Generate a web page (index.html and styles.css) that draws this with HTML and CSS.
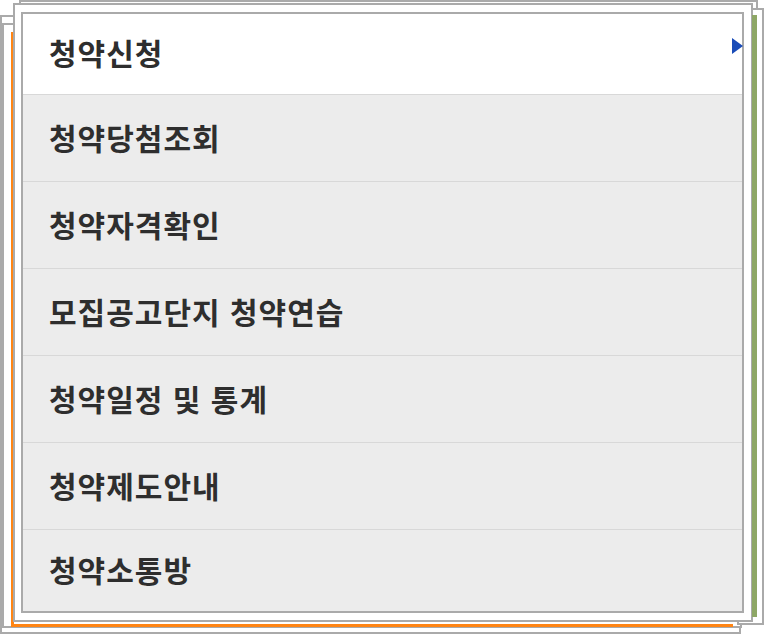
FILE: index.html
```html
<!DOCTYPE html>
<html lang="ko">
<head>
<meta charset="UTF-8">
<meta name="viewport" content="width=device-width, initial-scale=1.0">
<title>청약 메뉴</title>
<link rel="stylesheet" href="styles.css">
</head>
<body>
<div class="stack">
    <!-- 뒤에 겹쳐진 창들 -->
    <div class="sheet sheet-top"></div>
    <div class="sheet sheet-bottom"></div>
    <div class="sheet sheet-left"></div>
    <div class="sheet sheet-right"></div>
    <div class="orange-edge"></div>
    <div class="sheet sheet-front"></div>
    <div class="green-edge"></div>

    <ul class="menu">
        <li class="menu-item active">청약신청<span class="arrow"></span></li>
        <li class="menu-item">청약당첨조회</li>
        <li class="menu-item">청약자격확인</li>
        <li class="menu-item">모집공고단지 청약연습</li>
        <li class="menu-item">청약일정 및 통계</li>
        <li class="menu-item">청약제도안내</li>
        <li class="menu-item last">청약소통방</li>
    </ul>
</div>
</body>
</html>
```

FILE: styles.css
```css
body {
    margin: 0;
    padding: 0;
    background-color: #fff;
    font-family: "Noto Sans CJK KR", "Liberation Sans", sans-serif;
}
.stack {
    position: relative;
    width: 764px;
    height: 634px;
    overflow: hidden;
    padding-top: 12px;
    box-sizing: border-box;
}
.sheet {
    position: absolute;
    background-color: #fff;
    border: 2px solid #aaa;
    box-sizing: border-box;
}
.sheet-top {
    left: 19px;
    top: 0;
    width: 739px;
    height: 300px;
}
.sheet-bottom {
    left: 0;
    top: 15px;
    width: 741px;
    height: 619px;
}
.sheet-left {
    left: 2px;
    top: 23px;
    width: 740px;
    height: 605px;
}
.sheet-right {
    left: 737px;
    top: 8px;
    width: 27px;
    height: 617px;
}
.orange-edge {
    position: absolute;
    left: 11px;
    top: 32px;
    width: 722px;
    height: 595px;
    border-left: 3px solid #ff8514;
    border-bottom: 3px solid #ff8514;
    box-sizing: border-box;
}
.sheet-front {
    left: 13px;
    top: 3px;
    width: 740px;
    height: 619px;
}
.green-edge {
    position: absolute;
    left: 752px;
    top: 15px;
    width: 5px;
    height: 602px;
    background-color: #8ea766;
}
.menu {
    position: relative;
    list-style: none;
    margin: 0 0 0 21px;
    padding: 0;
    width: 723px;
    height: 601px;
    border: 2px solid #aaa;
    box-sizing: border-box;
    background-color: #ececec;
    display: flex;
    flex-direction: column;
}
.menu-item {
    position: relative;
    height: 86px;
    flex-shrink: 0;
    display: flex;
    align-items: center;
    padding-left: 26px;
    padding-bottom: 3px;
    box-sizing: border-box;
    border-top: 1px solid #d8d8d8;
    font-size: 30px;
    font-weight: 700;
    color: #2e2e2e;
    letter-spacing: 1px;
}
.menu-item + .menu-item {
    height: 87px;
}
.menu-item.active {
    height: 80px;
    padding-bottom: 5px;
    border-top: none;
    background-color: #fff;
}
.menu-item.last {
    flex: 1;
}
.arrow {
    position: absolute;
    right: -1px;
    top: 24px;
    width: 0;
    height: 0;
    border-top: 8px solid transparent;
    border-bottom: 8px solid transparent;
    border-left: 11px solid #1a4cb8;
}
```
